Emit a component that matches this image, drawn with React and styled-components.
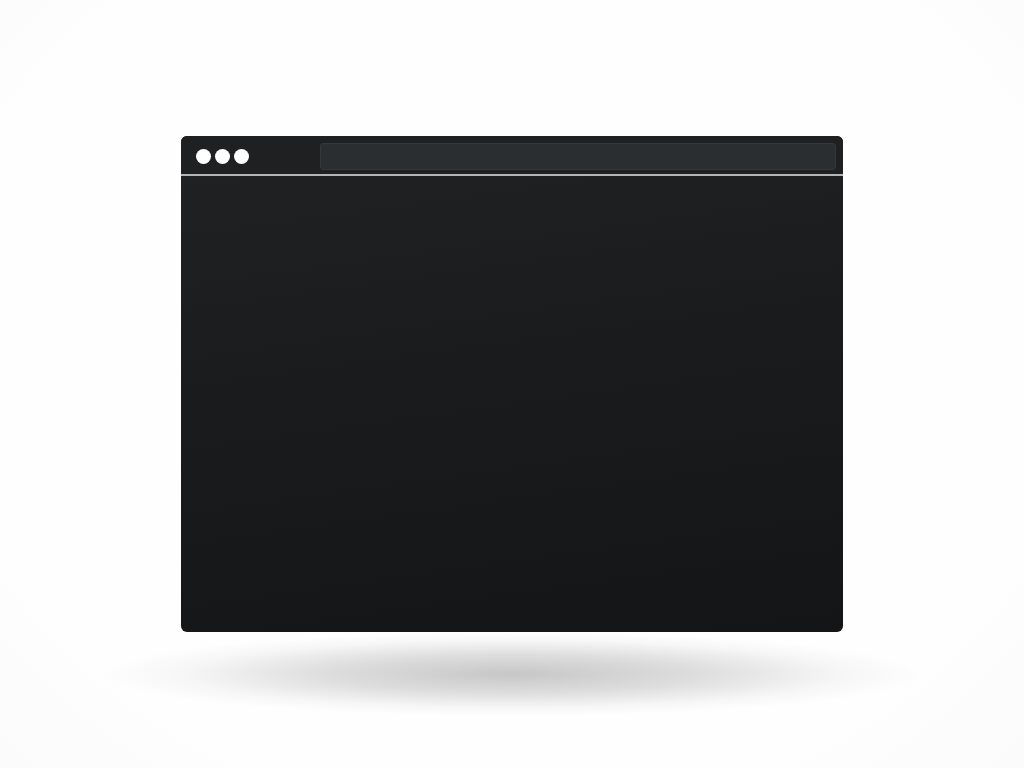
import React from "react"
import styled, { createGlobalStyle } from "styled-components"

const GlobalStyle = createGlobalStyle`
  html, body {
    margin: 0;
    padding: 0;
    background: #fefefe;
    font-family: "Liberation Sans", Arial, sans-serif;
  }
`

const Page = styled.div`
  min-height: 100vh;
  box-sizing: border-box;
  padding-top: 136px;
  display: flex;
  flex-direction: column;
  align-items: center;
  background: radial-gradient(ellipse at 50% 45%, #ffffff 0%, #fefefe 75%, #fbfbfb 100%);
`

const Window = styled.div`
  width: 662px;
  height: 496px;
  border-radius: 6px;
  overflow: hidden;
  display: flex;
  flex-direction: column;
  background: linear-gradient(172deg, #202223 0%, #1a1c1d 40%, #131516 100%);
  position: relative;
  z-index: 1;
`

const TitleBar = styled.div`
  height: 40px;
  box-sizing: border-box;
  padding: 7px 7px 0 15px;
  display: flex;
  align-items: flex-start;
  background: #1e2021;
  border-bottom: 2px solid #b4b6b6;
`

const Dots = styled.div`
  display: flex;
  gap: 4px;
  height: 27px;
  align-items: center;
`

const Dot = styled.span`
  width: 15px;
  height: 15px;
  border-radius: 50%;
  background: #ffffff;
`

const AddressBar = styled.div`
  margin-left: auto;
  width: 516px;
  height: 27px;
  box-sizing: border-box;
  border-radius: 3px;
  background: #2a2e30;
  border: 1px solid #33383a;
`

const Body = styled.div`
  flex: 1;
`

const Shadow = styled.div`
  width: 820px;
  height: 100px;
  margin-top: -8px;
  background: radial-gradient(ellipse 50% 42% at 50% 50%, rgba(0,0,0,0.22) 0%, rgba(0,0,0,0.13) 45%, rgba(0,0,0,0.03) 80%, rgba(0,0,0,0) 100%);
`

export default function App() {
  return (
    <>
      <GlobalStyle />
      <Page>
        <Window>
          <TitleBar>
            <Dots>
              <Dot />
              <Dot />
              <Dot />
            </Dots>
            <AddressBar />
          </TitleBar>
          <Body />
        </Window>
        <Shadow />
      </Page>
    </>
  )
}
